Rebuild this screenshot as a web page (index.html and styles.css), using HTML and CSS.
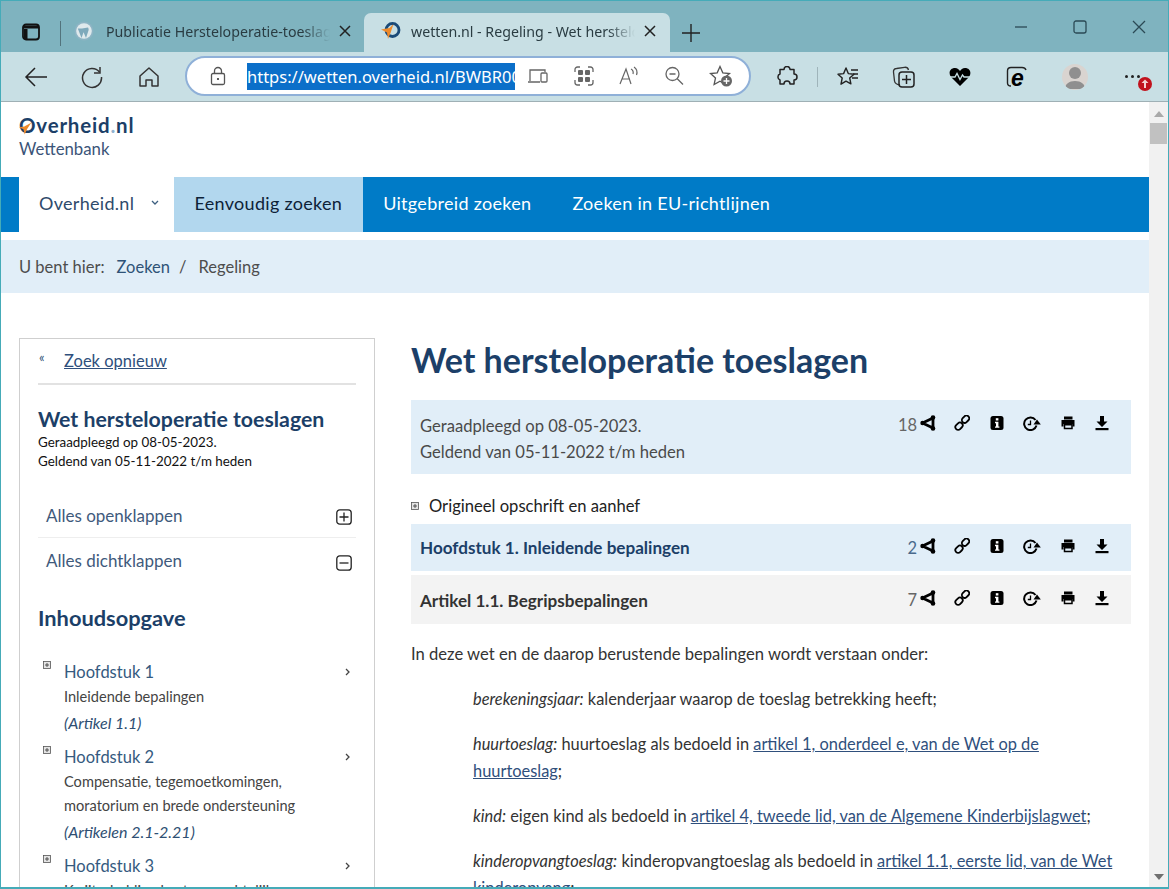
FILE: index.html
```html
<!DOCTYPE html>
<html lang="nl">
<head>
  <meta charset="UTF-8" />
  <title>wetten.nl - Regeling - Wet hersteloperatie toeslagen</title>
  <link rel="stylesheet" href="styles.css">
</head>
<body>
  <svg class="defs" width="0" height="0">
    <defs>
      <g id="i-share"><path d="M2.500 8 13 3M2.500 8 13 13M13 3v10" fill="none" stroke="#000" stroke-width="2.800"/><circle cx="2.500" cy="8" r="2.200"/><circle cx="13" cy="2.500" r="2.300"/><circle cx="13" cy="13.500" r="2.300"/></g>
      <g id="i-link"><g fill="none" stroke="#000" stroke-width="1.800"><rect x="7.500" y="1.500" width="8" height="5.500" rx="2.700" transform="rotate(-45 11.500 4.200)"/><rect x="1" y="8.500" width="8" height="5.500" rx="2.700" transform="rotate(-45 5 11.200)"/></g></g>
      <g id="i-info"><rect x="1.500" y="1" width="13" height="14" rx="2.500"/><rect x="6.800" y="3.200" width="2.600" height="2.300" fill="#fff"/><path d="M6 6.800h3.400v4.600h1v1.400H6v-1.400h1V8.200H6z" fill="#fff"/></g>
      <g id="i-hist"><path d="M12.500 5A6.300 6.300 0 1 0 13.500 10.500" fill="none" stroke="#000" stroke-width="2"/><path d="M10.500 9.500 14 4.500l3.800 5z"/><path d="M7.500 5.500v4H4.800" fill="none" stroke="#000" stroke-width="1.300"/></g>
      <g id="i-print"><path d="M4 1.500h8.500v3H4z"/><path d="M1.500 5h13v6.500h-2V9h-9v2.500h-2z"/><path d="M4.500 9.800h7.500v3.700H4.500z" fill="none" stroke="#000" stroke-width="1.500"/></g>
      <g id="i-down"><path d="M6 1h4v5.500h3.500L8 12 2.500 6.500H6z"/><rect x="1.500" y="13" width="13" height="2.200"/></g>
    </defs>
  </svg>

  <div class="browser">
    <div class="tabstrip">
      <svg class="tab-toggle" width="20" height="20" viewBox="0 0 20 20"><rect x="2" y="2.500" width="16" height="15" rx="3" fill="none" stroke="#111" stroke-width="1.800"/><path d="M2 3.500h16v3H2zM3 7h3.500v10H3z" fill="#111"/></svg>
      <span class="tab-sep"></span>
      <div class="tab">
        <svg class="favicon" width="20" height="20" viewBox="0 0 20 20"><circle cx="10" cy="10" r="9.500" fill="#8db4c4"/><circle cx="10" cy="10" r="7.800" fill="#dfe9ec"/><path d="M3.800 7.500 7.500 17l2.300-6.500-1.500-3M8 7.500l4 9.500 2.500-7.500c.5-1.500-.2-2.500-.5-3" fill="#7ea9bb"/></svg>
        <span class="tab-title">Publicatie Hersteloperatie-toeslagen</span>
        <svg class="tab-x" width="14" height="14" viewBox="0 0 14 14"><path d="M2 2l10 10M12 2 2 12" stroke="#222" stroke-width="1.500"/></svg>
      </div>
      <div class="tab tab-active">
        <svg class="favicon" width="22" height="22" viewBox="0 0 22 22"><circle cx="12.500" cy="10" r="6.500" fill="none" stroke="#1a4a78" stroke-width="2.800"/><path d="M1 9.500l8.500-1.500 4-4-3 9-2.500 6-1-6.500z" fill="#ee8a2a"/></svg>
        <span class="tab-title">wetten.nl - Regeling - Wet hersteloperatie toeslagen</span>
        <svg class="tab-x" width="14" height="14" viewBox="0 0 14 14"><path d="M2 2l10 10M12 2 2 12" stroke="#222" stroke-width="1.500"/></svg>
      </div>
      <svg class="tab-new" width="20" height="20" viewBox="0 0 20 20"><path d="M10 1v18M1 10h18" stroke="#222" stroke-width="1.400"/></svg>
      <div class="win-controls">
        <svg width="14" height="14" viewBox="0 0 14 14"><path d="M1 7h12" stroke="#2b4a55" stroke-width="1.300"/></svg>
        <svg width="14" height="14" viewBox="0 0 14 14"><rect x="1" y="1" width="12" height="12" rx="2" fill="none" stroke="#2b4a55" stroke-width="1.300"/></svg>
        <svg width="14" height="14" viewBox="0 0 14 14"><path d="M1 1l12 12M13 1 1 13" stroke="#2b4a55" stroke-width="1.300"/></svg>
      </div>
    </div>

    <div class="toolbar">
      <button class="tool-btn back"><svg width="24" height="24" viewBox="0 0 24 24"><path d="M23 12H2M11 3l-9 9 9 9" fill="none" stroke="#222" stroke-width="1.500"/></svg></button>
      <button class="tool-btn"><svg width="24" height="24" viewBox="0 0 24 24"><path d="M19.500 7A9.500 9.500 0 1 0 21.500 12" fill="none" stroke="#333" stroke-width="1.500"/><path d="M20 2v6h-6" fill="none" stroke="#333" stroke-width="1.500"/></svg></button>
      <button class="tool-btn"><svg width="22" height="22" viewBox="0 0 22 22"><path d="M2 10 11 2l9 8v10h-6v-6H8v6H2z" fill="none" stroke="#333" stroke-width="1.500" stroke-linejoin="round"/></svg></button>
      <div class="addressbar">
        <svg class="lock" width="18" height="20" viewBox="0 0 18 20"><rect x="2.500" y="7.500" width="13" height="11" rx="1.500" fill="none" stroke="#555" stroke-width="1.300"/><path d="M5.500 7.500V5a3.500 3.500 0 0 1 7 0v2.500" fill="none" stroke="#555" stroke-width="1.300"/><circle cx="9" cy="13" r="1.100" fill="#333"/></svg>
        <div class="url-clip"><span class="url">https://wetten.overheid.nl/BWBR0047310/2022-11-05</span></div>
        <div class="addr-icons">
          <svg width="22" height="18" viewBox="0 0 22 18"><path d="M3 14V3h15v2M1 15h12" fill="none" stroke="#666" stroke-width="1.300"/><rect x="14" y="6" width="6" height="9" rx="1" fill="none" stroke="#666" stroke-width="1.300"/></svg>
          <svg width="20" height="20" viewBox="0 0 20 20"><path d="M1 6V3.500A2.500 2.500 0 0 1 3.500 1H6M14 1h2.500A2.500 2.500 0 0 1 19 3.500V6M19 14v2.500a2.500 2.500 0 0 1-2.500 2.500H14M6 19H3.500A2.500 2.500 0 0 1 1 16.500V14" fill="none" stroke="#666" stroke-width="1.300"/><rect x="4" y="4" width="5" height="5" rx="1" fill="#666"/><rect x="11" y="4" width="5" height="5" rx="1" fill="#666"/><rect x="4" y="11" width="5" height="5" rx="1" fill="#666"/><rect x="11" y="11" width="5" height="5" rx="1" fill="#666"/></svg>
          <svg width="20" height="20" viewBox="0 0 20 20"><path d="M1 18 7 3l5 15M3 13h8M12 3c2 1 2.500 3 2 5M15 1c3 2 3.500 5 2.500 8" fill="none" stroke="#666" stroke-width="1.200"/></svg>
          <svg width="20" height="20" viewBox="0 0 20 20"><circle cx="8.500" cy="8" r="6.500" fill="none" stroke="#666" stroke-width="1.300"/><path d="M5.500 8h6M13 12.500l6 6" stroke="#666" stroke-width="1.300"/></svg>
          <svg width="24" height="22" viewBox="0 0 24 22"><path d="M11 1.500l2.800 6.300 6.700.7-5 4.500 1.400 6.500-5.900-3.300-5.900 3.300 1.400-6.500-5-4.500 6.700-.7z" fill="none" stroke="#555" stroke-width="1.300"/><circle cx="17.500" cy="16" r="5.500" fill="#666"/><path d="M17.500 13v6M14.500 16h6" stroke="#fff" stroke-width="1.300"/></svg>
        </div>
      </div>
      <div class="tool-right">
        <svg width="22" height="22" viewBox="0 0 22 22"><path d="M8 3.500a3 3 0 0 1 6 0h4v4.500a3 3 0 0 1 0 6v4h-4a3 3 0 0 0-6 0H4v-4a3 3 0 0 1-2-3 3 3 0 0 1 2-3V3.500z" fill="none" stroke="#222" stroke-width="1.500" stroke-linejoin="round"/></svg>
        <span class="tool-sep"></span>
        <svg class="t-fav" width="22" height="22" viewBox="0 0 22 22"><path d="M9 2l2.300 5.600 5.700.6-4.300 3.800 1.200 5.800L9 15.200 4 18.200 5.200 12 1 8.200l5.600-.6z" fill="none" stroke="#222" stroke-width="1.400" stroke-linejoin="round"/><path d="M14 4h7M16 8h5M15 12h6" stroke="#222" stroke-width="1.300"/></svg>
        <svg class="t-coll" width="24" height="24" viewBox="0 0 24 24"><path d="M8 20c-3-.5-5-1-5.500-4L1.500 7c-.2-2 1-3.500 3-3.500l8-1.200c2-.2 3.500.5 4 2.700" fill="none" stroke="#333" stroke-width="1.300"/><rect x="7" y="7" width="15" height="15" rx="3" fill="none" stroke="#222" stroke-width="1.500"/><path d="M14.500 10v9M10 14.500h9" stroke="#222" stroke-width="1.500"/></svg>
        <svg class="t-heart" width="22" height="20" viewBox="0 0 22 20"><path d="M11 19 2 10C-1 6 1 1 6 1c2.500 0 4 1.500 5 3 1-1.500 2.500-3 5-3 5 0 7 5 4 9z"/><path d="M0 10h6l2-3.500 3 6 2.500-4.500 1.500 2h7" fill="none" stroke="#c8dfe4" stroke-width="1.300"/></svg>
        <svg class="t-ie" width="22" height="22" viewBox="0 0 22 22"><path d="M5 20c-2 0-3.500-1-3.500-3V5c0-2 1.500-3.500 3.500-3.500h11c2 0 3.500 1 4 2.500" fill="none" stroke="#222" stroke-width="1.400"/><text x="5" y="20" class="ie-glyph">e</text></svg>
        <span class="avatar"><svg width="26" height="26" viewBox="0 0 26 26"><circle cx="13" cy="9" r="6" fill="#8f8f8f"/><path d="M3 25c0-5 4-8 10-8s10 3 10 8z" fill="#8f8f8f"/></svg></span>
        <span class="more">
          <i></i><i></i><i></i>
          <b class="update"><svg width="14" height="14" viewBox="0 0 14 14"><path d="M7 2.500 10.500 6H8v5H6V6H3.500z" fill="#f3d0d0"/></svg></b>
        </span>
      </div>
    </div>
  </div>

  <div class="viewport">
    <div class="page">
      <header class="site-head">
        <div class="logo"><span class="logo-o">O</span>verheid<span class="logo-dot">.</span>nl<svg class="logo-star" width="13" height="13" viewBox="0 0 16 16"><path d="M0 6.500 6.500 5.500 15 1l-5 7.500-3 7-1.500-6.500z" fill="#ee8a2a"/></svg></div>
        <div class="logo-sub">Wettenbank</div>
      </header>

      <nav class="mainnav">
        <a class="nav-home">Overheid.nl <svg width="8" height="6" viewBox="0 0 8 6"><path d="M1 1l3 3 3-3" fill="none" stroke="#3d5f80" stroke-width="1.300"/></svg></a>
        <a class="nav-item nav-current">Eenvoudig zoeken</a>
        <a class="nav-item">Uitgebreid zoeken</a>
        <a class="nav-item">Zoeken in EU-richtlijnen</a>
      </nav>

      <div class="crumbs">
        <span>U bent hier:</span><a>Zoeken</a><span class="crumb-sep">/</span><span>Regeling</span>
      </div>

      <div class="columns">
        <aside class="sidebar">
          <div class="back-row"><span class="back-mark">«</span><a class="link">Zoek opnieuw</a></div>
          <h2 class="side-title">Wet hersteloperatie toeslagen</h2>
          <p class="side-meta">Geraadpleegd op 08-05-2023.<br>Geldend van 05-11-2022 t/m heden</p>

          <div class="toggle-row toggle-first">
            <span>Alles openklappen</span>
            <svg width="16" height="16" viewBox="0 0 16 16"><rect x=".8" y=".8" width="14.400" height="14.400" rx="3" fill="none" stroke="#222" stroke-width="1.300"/><path d="M8 3.500v9M3.500 8h9" stroke="#222" stroke-width="1.300"/></svg>
          </div>
          <div class="toggle-row">
            <span>Alles dichtklappen</span>
            <svg width="16" height="16" viewBox="0 0 16 16"><rect x=".8" y=".8" width="14.400" height="14.400" rx="3" fill="none" stroke="#222" stroke-width="1.300"/><path d="M3.500 8h9" stroke="#222" stroke-width="1.300"/></svg>
          </div>

          <h2 class="toc-title">Inhoudsopgave</h2>
          <ul class="toc">
            <li>
              <svg class="mini-plus" width="8" height="8" viewBox="0 0 8 8"><rect x=".5" y=".5" width="7" height="7" fill="#e4e4e4" stroke="#555" stroke-width=".8"/><path d="M4 2v4M2 4h4" stroke="#333" stroke-width=".8"/></svg>
              <div class="toc-body">
                <a class="toc-head">Hoofdstuk 1</a>
                <div class="toc-desc">Inleidende bepalingen</div>
                <div class="toc-art"><em>(Artikel 1.1)</em></div>
              </div>
              <svg class="toc-arrow" width="6" height="8" viewBox="0 0 6 8"><path d="M1 1l3 3-3 3" fill="none" stroke="#444" stroke-width="1.300"/></svg>
            </li>
            <li>
              <svg class="mini-plus" width="8" height="8" viewBox="0 0 8 8"><rect x=".5" y=".5" width="7" height="7" fill="#e4e4e4" stroke="#555" stroke-width=".8"/><path d="M4 2v4M2 4h4" stroke="#333" stroke-width=".8"/></svg>
              <div class="toc-body">
                <a class="toc-head">Hoofdstuk 2</a>
                <div class="toc-desc">Compensatie, tegemoetkomingen,<br>moratorium en brede ondersteuning</div>
                <div class="toc-art"><em>(Artikelen 2.1-2.21)</em></div>
              </div>
              <svg class="toc-arrow" width="6" height="8" viewBox="0 0 6 8"><path d="M1 1l3 3-3 3" fill="none" stroke="#444" stroke-width="1.300"/></svg>
            </li>
            <li>
              <svg class="mini-plus" width="8" height="8" viewBox="0 0 8 8"><rect x=".5" y=".5" width="7" height="7" fill="#e4e4e4" stroke="#555" stroke-width=".8"/><path d="M4 2v4M2 4h4" stroke="#333" stroke-width=".8"/></svg>
              <div class="toc-body">
                <a class="toc-head">Hoofdstuk 3</a>
                <div class="toc-desc">Kwijtschelding best. en rechtelijke</div>
              </div>
              <svg class="toc-arrow" width="6" height="8" viewBox="0 0 6 8"><path d="M1 1l3 3-3 3" fill="none" stroke="#444" stroke-width="1.300"/></svg>
            </li>
          </ul>
        </aside>

        <main class="content">
          <h1 class="title">Wet hersteloperatie toeslagen</h1>

          <div class="info-bar">
            <p>Geraadpleegd op 08-05-2023.<br>Geldend van 05-11-2022 t/m heden</p>
            <div class="actions">
              <span class="count">18</span>
              <svg width="16" height="16" viewBox="0 0 16 16"><use href="#i-share"/></svg>
              <svg width="16" height="16" viewBox="0 0 16 16"><use href="#i-link"/></svg>
              <svg width="16" height="16" viewBox="0 0 16 16"><use href="#i-info"/></svg>
              <svg width="18" height="16" viewBox="0 0 18 16"><use href="#i-hist"/></svg>
              <svg width="16" height="16" viewBox="0 0 16 16"><use href="#i-print"/></svg>
              <svg width="16" height="16" viewBox="0 0 16 16"><use href="#i-down"/></svg>
            </div>
          </div>

          <div class="opschrift">
            <svg width="8" height="8" viewBox="0 0 8 8"><rect x=".5" y=".5" width="7" height="7" fill="#e4e4e4" stroke="#555" stroke-width=".8"/><path d="M4 2v4M2 4h4" stroke="#333" stroke-width=".8"/></svg>
            <span>Origineel opschrift en aanhef</span>
          </div>

          <div class="head-bar chapter">
            <h3>Hoofdstuk 1. Inleidende bepalingen</h3>
            <div class="actions">
              <span class="count count-blue">2</span>
              <svg width="16" height="16" viewBox="0 0 16 16"><use href="#i-share"/></svg>
              <svg width="16" height="16" viewBox="0 0 16 16"><use href="#i-link"/></svg>
              <svg width="16" height="16" viewBox="0 0 16 16"><use href="#i-info"/></svg>
              <svg width="18" height="16" viewBox="0 0 18 16"><use href="#i-hist"/></svg>
              <svg width="16" height="16" viewBox="0 0 16 16"><use href="#i-print"/></svg>
              <svg width="16" height="16" viewBox="0 0 16 16"><use href="#i-down"/></svg>
            </div>
          </div>

          <div class="head-bar article">
            <h3>Artikel 1.1. Begripsbepalingen</h3>
            <div class="actions">
              <span class="count">7</span>
              <svg width="16" height="16" viewBox="0 0 16 16"><use href="#i-share"/></svg>
              <svg width="16" height="16" viewBox="0 0 16 16"><use href="#i-link"/></svg>
              <svg width="16" height="16" viewBox="0 0 16 16"><use href="#i-info"/></svg>
              <svg width="18" height="16" viewBox="0 0 18 16"><use href="#i-hist"/></svg>
              <svg width="16" height="16" viewBox="0 0 16 16"><use href="#i-print"/></svg>
              <svg width="16" height="16" viewBox="0 0 16 16"><use href="#i-down"/></svg>
            </div>
          </div>

          <p class="lead">In deze wet en de daarop berustende bepalingen wordt verstaan onder:</p>
          <div class="defs-list">
            <p><em>berekeningsjaar:</em> kalenderjaar waarop de toeslag betrekking heeft;</p>
            <p><em>huurtoeslag:</em> huurtoeslag als bedoeld in <a class="link">artikel 1, onderdeel e, van de Wet op de huurtoeslag</a>;</p>
            <p><em>kind:</em> eigen kind als bedoeld in <a class="link">artikel 4, tweede lid, van de Algemene Kinderbijslagwet</a>;</p>
            <p><em>kinderopvangtoeslag:</em> kinderopvangtoeslag als bedoeld in <a class="link">artikel 1.1, eerste lid, van de Wet kinderopvang</a>;</p>
          </div>
        </main>
      </div>
    </div>

    <div class="scrollbar">
      <svg width="10" height="6" viewBox="0 0 10 6"><path d="M5 0l5 6H0z" fill="#a9a9a9"/></svg>
      <span class="thumb"></span>
      <svg class="scroll-down" width="10" height="6" viewBox="0 0 10 6"><path d="M0 0h10L5 6z" fill="#6f6f6f"/></svg>
    </div>
  </div>
</body>
</html>
```

FILE: styles.css
```css
* {
  box-sizing: border-box;
}

html, body {
  margin: 0;
  height: 100%;
  overflow: hidden;
}

body {
  width: 1169px;
  height: 889px;
  display: flex;
  flex-direction: column;
  font-family: 'Open Sans', 'Noto Sans', sans-serif;
  color: #333;
  background: #fff;
  border: 1px solid #45abb8;
  border-bottom-width: 2px;
}

.defs {
  position: absolute;
}

/* browser chrome */
.tabstrip {
  height: 51px;
  background: #7fb3bf;
  display: flex;
  align-items: flex-end;
  padding-left: 20px;
  font-family: 'Noto Sans', sans-serif;
}

.tab-toggle {
  margin-bottom: 10px;
}

.tab-sep {
  width: 1px;
  height: 25px;
  background: #52737c;
  margin: 0 7px 6px 19px;
}

.tab {
  display: flex;
  align-items: center;
  height: 39px;
  width: 296px;
  padding: 0 12px 3px 6px;
  font-size: 14.200px;
  color: #2a3c42;
}

.tab .favicon {
  flex: none;
  margin-right: 12px;
}

.tab-title {
  flex: 1;
  overflow: hidden;
  white-space: nowrap;
  -webkit-mask-image: linear-gradient(to right, #000 88%, transparent 100%);
  mask-image: linear-gradient(to right, #000 88%, transparent 100%);
}

.tab-x {
  flex: none;
  margin-left: 8px;
}

.tab-active {
  background: #c8dfe4;
  border-radius: 7px 7px 0 0;
  width: 306px;
  padding-left: 16px;
  padding-right: 13px;
}

.tab-active .favicon {
  margin-right: 9px;
}

.tab-new {
  margin: 0 0 9px 11px;
}

.win-controls {
  margin-left: auto;
  align-self: flex-start;
  display: flex;
  gap: 45px;
  padding: 19px 22px 0 0;
}

.toolbar {
  height: 50px;
  background: #c8dfe4;
  border-bottom: 1px solid #9fb0b5;
  display: flex;
  align-items: center;
  padding-left: 23px;
}

.tool-btn {
  border: none;
  background: none;
  padding: 0;
  margin-right: 33px;
  width: 24px;
  height: 24px;
  display: flex;
  align-items: center;
  justify-content: center;
}

.tool-btn.back {
  margin-right: 32px;
}

.tool-btn:nth-child(3) {
  margin-right: 24px;
}

.addressbar {
  width: 566px;
  height: 40px;
  background: #fff;
  border: 2px solid #8fb0d8;
  border-radius: 20px;
  display: flex;
  align-items: center;
  padding-left: 22px;
  margin-top: -1px;
}

.lock {
  flex: none;
}

.url-clip {
  width: 268px;
  margin-left: 20px;
  overflow: hidden;
  flex: none;
  height: 27px;
}

.url {
  display: inline-block;
  background: #0b6fc9;
  color: #fff;
  font-size: 16.500px;
  line-height: 27px;
  white-space: nowrap;
  font-family: 'Noto Sans', sans-serif;
}

.addr-icons {
  display: flex;
  align-items: center;
  gap: 25px;
  margin-left: 12px;
}

.tool-right {
  flex: 1;
  display: flex;
  align-items: center;
  padding-left: 25px;
}

.tool-sep {
  width: 1px;
  height: 20px;
  background: #9fb4ba;
  margin: 0 19px;
}

.t-coll {
  margin-left: 33px;
}

.t-heart {
  margin-left: 33px;
}

.t-ie {
  margin-left: 35px;
}

.ie-glyph {
  font-family: 'Liberation Sans', sans-serif;
  font-weight: 700;
  font-style: italic;
  font-size: 23px;
}

.avatar {
  width: 26px;
  height: 26px;
  border-radius: 50%;
  background: #d9d4d0;
  margin-left: 34px;
  overflow: hidden;
  display: block;
}

.avatar svg {
  display: block;
}

.more {
  position: relative;
  display: flex;
  gap: 3px;
  margin-left: 37px;
}

.more i {
  width: 3px;
  height: 3px;
  border-radius: 50%;
  background: #222;
}

.update {
  position: absolute;
  left: 13px;
  top: 2px;
  width: 14px;
  height: 14px;
  border-radius: 50%;
  background: #c1121c;
}

.update svg {
  display: block;
}

/* page */
.viewport {
  flex: 1;
  display: flex;
  min-height: 0;
  overflow: hidden;
}

.page {
  width: 1148px;
  flex: none;
}

.scrollbar {
  flex: 1;
  background: #f1f1f1;
  display: flex;
  flex-direction: column;
  align-items: center;
  padding: 9px 0 7px;
}

.thumb {
  display: block;
  width: 17px;
  height: 21px;
  background: #c1c1c1;
  margin-top: 6px;
}

.scroll-down {
  margin-top: auto;
}

.site-head {
  height: 75px;
  padding: 12px 18px 0;
  color: #1f3f69;
}

.logo {
  font-family: 'Lato', sans-serif;
  font-weight: 700;
  font-size: 20.500px;
  line-height: 22px;
  letter-spacing: .8px;
  color: #1c3f68;
  position: relative;
}

.logo-star {
  position: absolute;
  left: 0;
  top: 8px;
}

.logo-o {
  position: relative;
}

.logo-dot {
  color: #8fb3d0;
}

.logo-sub {
  font-size: 16.800px;
  line-height: 22px;
  margin-top: 2px;
  color: #3b5478;
  font-family: 'Lato', sans-serif;
}

.mainnav {
  height: 55px;
  background: #007bc7;
  padding-left: 18px;
  display: flex;
  font-family: 'Lato', sans-serif;
  font-size: 18px;
  letter-spacing: .3px;
}

.mainnav a {
  display: flex;
  align-items: center;
  color: #fff;
  padding-bottom: 4px;
}

.mainnav .nav-home {
  width: 155px;
  padding-left: 20px;
  background: #fff;
  color: #2e4a6b;
  gap: 17px;
}

.nav-item {
  padding: 0 20.500px;
}

.mainnav .nav-current {
  background: #b2d7ee;
  color: #0d2238;
}

.crumbs {
  margin-top: 8px;
  height: 53px;
  background: #e1eef8;
  padding-left: 18px;
  display: flex;
  align-items: center;
  gap: 12px;
  font-family: 'Lato', sans-serif;
  font-size: 16.500px;
  color: #4d4d4d;
}

.crumbs a {
  color: #2f5377;
}

.crumb-sep {
  margin: 0 0 0 -3px;
}

.columns {
  display: flex;
  gap: 36px;
  padding: 45px 18px 0;
  align-items: flex-start;
}

.sidebar {
  width: 356px;
  flex: none;
  border: 1px solid #cfcfcf;
  padding: 0 18px 0;
  font-family: 'Lato', sans-serif;
  height: 700px;
}

.back-row {
  height: 46px;
  border-bottom: 2px solid #e2e2e2;
  display: flex;
  align-items: center;
  font-size: 16.500px;
}

.back-mark {
  width: 26px;
  font-size: 13px;
  color: #2f5377;
  margin-top: -8px;
  padding-left: 1px;
}

.back-row .link {
  margin-top: -1px;
}

.link {
  color: #2f4f7c;
  text-decoration: underline;
}

.side-title {
  margin: 21px 0 0;
  font-size: 21.300px;
  line-height: 26px;
  font-weight: 700;
  color: #1c3f68;
}

.side-meta {
  margin: 1px 0 0;
  font-size: 13.400px;
  line-height: 18.500px;
  color: #111;
}

.toggle-row {
  height: 45px;
  display: flex;
  align-items: center;
  justify-content: space-between;
  padding: 0 4px 0 8px;
  font-size: 17px;
  color: #3f5a7c;
}

.toggle-first {
  margin-top: 23px;
  border-bottom: 1px solid #eee;
}

.toggle-row svg {
  margin-top: 4px;
}

.toc-title {
  margin: 21px 0 0;
  font-size: 21.800px;
  line-height: 28px;
  color: #1c3f68;
}

.toc {
  list-style: none;
  margin: 28px 0 0;
  padding: 0;
}

.toc li {
  display: flex;
  align-items: flex-start;
  margin-bottom: 9px;
}

.mini-plus {
  flex: none;
  margin: 1px 0 0 5px;
}

.toc-body {
  flex: 1;
  margin-left: 13px;
}

.toc-head {
  display: block;
  font-size: 16.500px;
  line-height: 25px;
  color: #355a80;
}

.toc-desc {
  font-size: 14.600px;
  line-height: 24px;
  color: #444;
}

.toc-art {
  font-size: 16px;
  line-height: 26px;
  margin-top: 1px;
  color: #2f4f73;
}

.toc-arrow {
  flex: none;
  margin: 8px 5px 0 0;
}

.content {
  width: 720px;
  flex: none;
  font-family: 'Lato', sans-serif;
  font-size: 16.600px;
  color: #333;
}

.title {
  margin: 0;
  font-size: 34px;
  line-height: 43px;
  font-weight: 700;
  color: #1c3f68;
}

.info-bar {
  margin-top: 19px;
  height: 74px;
  background: #e1eef8;
  padding: 13px 9px 0;
  display: flex;
  justify-content: space-between;
  line-height: 26px;
}

.info-bar p {
  margin: 0;
  color: #4a4a4a;
}

.actions {
  display: flex;
  align-items: flex-start;
  gap: 18.400px;
  padding-right: 12px;
  height: 22px;
}

.actions svg {
  margin-top: 2px;
}

.count {
  color: #666;
  font-size: 16.500px;
  line-height: 24px;
  margin-right: -15.400px;
}

.count-blue {
  color: #4a6a8c;
}

.opschrift {
  height: 50px;
  display: flex;
  align-items: center;
  gap: 10px;
  color: #222;
  padding-top: 13px;
}

.head-bar {
  display: flex;
  align-items: center;
  justify-content: space-between;
  padding: 0 9px;
}

.head-bar .actions {
  margin-top: -2px;
}

.head-bar h3 {
  margin: 0;
  font-size: 17.100px;
  font-weight: 700;
}

.chapter {
  height: 47px;
  background: #e1eef8;
}

.chapter h3 {
  color: #1c3f68;
}

.article {
  height: 49px;
  margin-top: 4px;
  background: #f3f3f3;
}

.article h3 {
  color: #333;
  padding-top: 2px;
}

.lead {
  margin: 17px 0 0;
  line-height: 27px;
}

.defs-list {
  margin-top: 17px;
  padding-left: 62px;
  font-size: 16.400px;
}

.defs-list p {
  margin: 0 0 18px;
  line-height: 27px;
}
```
